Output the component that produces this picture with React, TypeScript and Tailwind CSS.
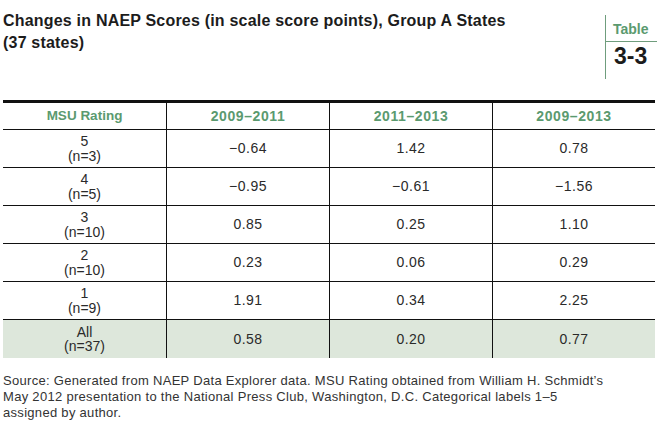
const rows = [
  { rating: "5", n: "(n=3)", vals: ["−0.64", "1.42", "0.78"] },
  { rating: "4", n: "(n=5)", vals: ["−0.95", "−0.61", "−1.56"] },
  { rating: "3", n: "(n=10)", vals: ["0.85", "0.25", "1.10"] },
  { rating: "2", n: "(n=10)", vals: ["0.23", "0.06", "0.29"] },
  { rating: "1", n: "(n=9)", vals: ["1.91", "0.34", "2.25"] },
];

const years = ["2009–2011", "2011–2013", "2009–2013"];

export default function App() {
  return (
    <div className="w-[671px] h-[431px] bg-white font-['Liberation_Sans',Arial,sans-serif] text-[#2a2a2a]">
      {/* title + table tag */}
      <div className="flex h-[100px]">
        <h1 className="pl-[3px] pt-[10px] text-[16px] leading-[22px] font-bold tracking-[0.2px] text-[#1c1c1c]">
          Changes in NAEP Scores (in scale score points), Group A States
          <br />
          (37 states)
        </h1>
        <div className="ml-auto mr-[14px] mt-[15px] h-[64px] w-[52px] border-l border-[#6f9d7d]">
          <div className="pl-[7px] pt-[6px] pb-[4px] border-b border-[#6f9d7d] text-[14px] leading-[16px] font-bold text-[#5b9a6f]">
            Table
          </div>
          <div className="pl-[8px] pt-[1px] text-[23px] leading-[26px] font-bold text-[#1c1c1c]">
            3-3
          </div>
        </div>
      </div>

      {/* table */}
      <div className="ml-[3px] w-[652px] border-t-[3px] border-[#111]">
        <div className="grid grid-cols-4 h-[27px] border-b border-[#111] font-bold text-[#5b9a6f]">
          <div className="flex items-center justify-center text-[13.5px]">MSU Rating</div>
          {years.map((h) => (
            <div
              key={h}
              className="flex items-center justify-center border-l border-[#111] text-[14px] tracking-[0.6px]"
            >
              {h}
            </div>
          ))}
        </div>
        {rows.map((r) => (
          <div key={r.rating} className="grid grid-cols-4 h-[38px] border-b border-[#111]">
            <div className="flex flex-col items-center justify-center text-[14px] leading-[14.5px]">
              <span>{r.rating}</span>
              <span>{r.n}</span>
            </div>
            {r.vals.map((v, i) => (
              <div key={i} className="flex items-center justify-center border-l border-[#111] text-[14px] tracking-[0.5px]">
                {v}
              </div>
            ))}
          </div>
        ))}
        <div className="grid grid-cols-4 h-[38px] bg-[#dde7db]">
          <div className="flex flex-col items-center justify-center text-[14px] leading-[14.5px]">
            <span>All</span>
            <span>(n=37)</span>
          </div>
          {["0.58", "0.20", "0.77"].map((v, i) => (
            <div key={i} className="flex items-center justify-center border-l border-[#111] text-[14px] tracking-[0.5px]">
              {v}
            </div>
          ))}
        </div>
      </div>

      {/* source note */}
      <p className="mt-[15px] pl-[3px] text-[13px] leading-[16px] tracking-[0.3px] text-[#333]">
        Source: Generated from NAEP Data Explorer data. MSU Rating obtained from William H. Schmidt’s
        <br />
        May 2012 presentation to the National Press Club, Washington, D.C. Categorical labels 1–5
        <br />
        assigned by author.
      </p>
    </div>
  );
}
